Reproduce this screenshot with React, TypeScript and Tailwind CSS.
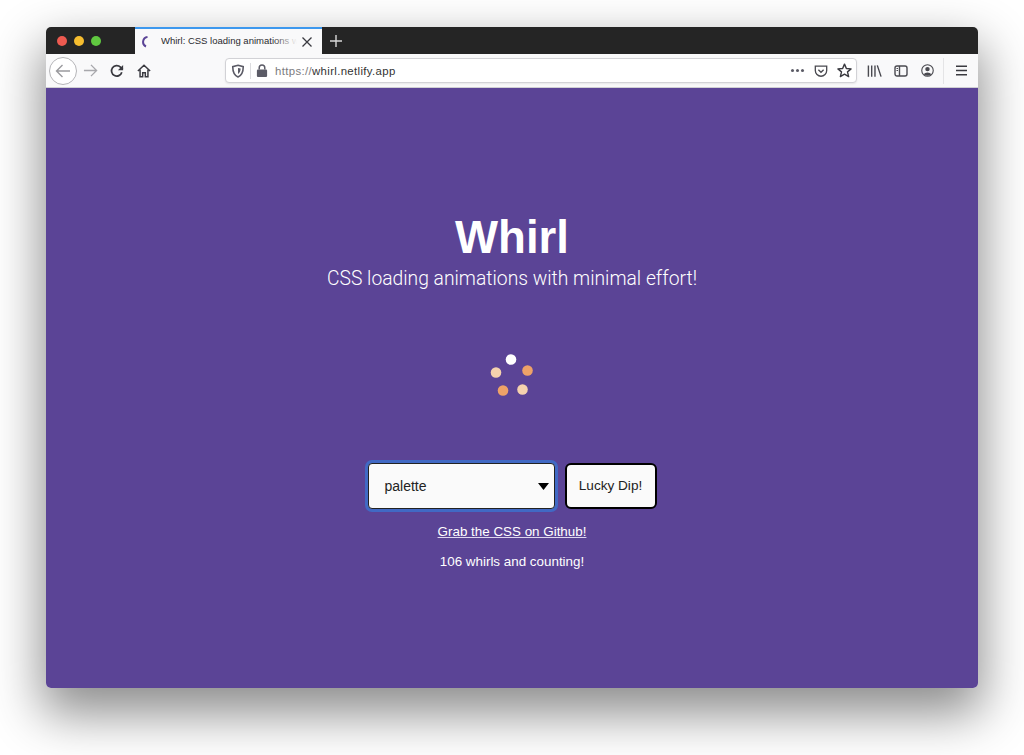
import React from 'react';

const sans = { fontFamily: '"Liberation Sans", Arial, sans-serif' };

const IconShield = () => (
  <svg width="14" height="14" viewBox="0 0 16 16" fill="none" stroke="#5b5b66" strokeWidth="1.8">
    <path d="M8 1.5 L14 3 C14 9 12 13 8 14.8 C4 13 2 9 2 3 Z" />
    <path d="M8 4.5 L11 5.2 C11 8 10 10.3 8 11.5 Z" fill="#5b5b66" stroke="none" />
  </svg>
);

const IconLock = () => (
  <svg width="12" height="13" viewBox="0 0 12 14">
    <path d="M3 6 V4 a3 3 0 0 1 6 0 V6" fill="none" stroke="#5b5b66" strokeWidth="1.6" />
    <rect x="0.5" y="6" width="11" height="8" rx="1.2" fill="#5b5b66" />
  </svg>
);

const Toolbar = () => (
  <div className="flex items-center h-[34px] bg-[#f9f9fa] border-b border-[#cfcfd3]">
    <div className="flex items-center justify-center w-[28px] h-[28px] ml-[3px] rounded-full border border-[#b5b5b8] bg-white">
      <svg width="16" height="16" viewBox="0 0 16 16" fill="none" stroke="#9a9a9e" strokeWidth="1.4">
        <path d="M15 8 H1.5 M7.5 2 L1.5 8 L7.5 14" />
      </svg>
    </div>
    <svg className="ml-[6px]" width="15" height="15" viewBox="0 0 16 16" fill="none" stroke="#a8a8ac" strokeWidth="1.4">
      <path d="M1 8 H14.5 M8.5 2 L14.5 8 L8.5 14" />
    </svg>
    <svg className="ml-[12px]" width="14" height="14" viewBox="0 0 16 16" fill="none" stroke="#3a3a40" strokeWidth="2">
      <path d="M13.5 9.5 A6 6 0 1 1 12 3.6 L14.5 6" />
      <path d="M15 1 V7 H9" fill="#3a3a40" stroke="none" />
    </svg>
    <svg className="ml-[13px]" width="14" height="14" viewBox="0 0 16 16" fill="none" stroke="#3a3a40" strokeWidth="1.7">
      <path d="M1 8 L8 1.5 L15 8 M3.5 6.5 V14.5 H6.5 V10 H9.5 V14.5 H12.5 V6.5" />
    </svg>
    <div className="flex items-center ml-[74px] w-[632px] h-[25px] rounded-[4px] border border-[#d2d2d6] bg-white shadow-[0_1px_2px_rgba(0,0,0,0.08)]">
      <div className="flex items-center justify-center w-[24px] h-[23px]"><IconShield /></div>
      <div className="w-px h-[16px] bg-[#dcdcdf]" />
      <div className="flex items-center ml-[5px]"><IconLock /></div>
      <span className="ml-[7px] mt-[2px] text-[11.4px] text-[#333] tracking-[0.35px] whitespace-nowrap" style={sans}>
        <span className="text-[#7b7b80]">https://</span>whirl.netlify.app
      </span>
      <div className="flex items-center gap-[2px] ml-auto">
        <div className="w-[3px] h-[3px] rounded-full bg-[#5b5b66]" />
        <div className="w-[3px] h-[3px] rounded-full bg-[#5b5b66]" />
        <div className="w-[3px] h-[3px] rounded-full bg-[#5b5b66]" />
      </div>
      <svg className="ml-[10px]" width="14" height="14" viewBox="0 0 16 16" fill="none" stroke="#4a4a50" strokeWidth="1.5">
        <path d="M1.5 2.5 H14.5 V7.5 A6.5 6.5 0 0 1 1.5 7.5 Z" />
        <path d="M5 6.5 L8 9.5 L11 6.5" />
      </svg>
      <svg className="ml-[9px] mr-[4px]" width="15" height="15" viewBox="0 0 16 16" fill="none" stroke="#3a3a40" strokeWidth="1.5" strokeLinejoin="round">
        <path d="M8 1.2 L10 5.8 L15 6.3 L11.2 9.5 L12.4 14.5 L8 11.9 L3.6 14.5 L4.8 9.5 L1 6.3 L6 5.8 Z" />
      </svg>
    </div>
    <svg className="ml-[10px]" width="15" height="14" viewBox="0 0 16 14" fill="none" stroke="#4a4a50" strokeWidth="1.5">
      <path d="M1.5 1 V13 M5 1 V13 M8.5 1 V13 M11 1 L15 13" />
    </svg>
    <svg className="ml-[12px]" width="14" height="14" viewBox="0 0 14 14" fill="none" stroke="#4a4a50" strokeWidth="1.4">
      <rect x="1" y="2" width="12" height="10" rx="2" />
      <path d="M5.5 2 V12" />
      <path d="M2.5 4.5 H4 M2.5 6.5 H4" strokeWidth="1" />
    </svg>
    <svg className="ml-[13px]" width="13" height="13" viewBox="0 0 14 14">
      <circle cx="7" cy="7" r="6.2" fill="none" stroke="#4a4a50" strokeWidth="1.2" />
      <circle cx="7" cy="5.5" r="2.4" fill="#4a4a50" />
      <path d="M2.8 11 A5 4 0 0 1 11.2 11 A6 6 0 0 1 2.8 11" fill="#4a4a50" />
    </svg>
    <div className="w-px h-[26px] ml-[9px] bg-[#e4e4e6]" />
    <svg className="ml-[12px]" width="11" height="11" viewBox="0 0 11 11" stroke="#3a3a40" strokeWidth="1.4">
      <path d="M0 1.2 H11 M0 5.5 H11 M0 9.8 H11" />
    </svg>
  </div>
);

const TabBar = () => (
  <div className="flex items-stretch h-[27px] bg-[#252525]">
    <div className="flex items-center gap-[7px] pl-[11px] w-[89px]">
      <div className="w-[10px] h-[10px] rounded-full bg-[#ed5a50]" />
      <div className="w-[10px] h-[10px] rounded-full bg-[#f6bd2f]" />
      <div className="w-[10px] h-[10px] rounded-full bg-[#60c840]" />
    </div>
    <div className="flex items-center w-[187px] bg-[#f9f9fa] border-t-2 border-[#3d98ee] pl-[7px]">
      <svg width="12" height="14" viewBox="0 0 12 14" fill="none">
        <path d="M5.5 2 A5 5 0 0 0 4 11.5" stroke="#5b4496" strokeWidth="2" />
      </svg>
      <div className="relative ml-[7px] w-[136px] overflow-hidden whitespace-nowrap text-[9.5px] text-[#2a2a2e]" style={sans}>
        Whirl: CSS loading animations with minimal effort
        <div className="absolute inset-y-0 right-0 w-[24px] bg-gradient-to-r from-transparent to-[#f9f9fa]" />
      </div>
      <svg className="ml-[5px]" width="10" height="10" viewBox="0 0 10 10" stroke="#3a3a40" strokeWidth="1.3">
        <path d="M0.5 0.5 L9.5 9.5 M9.5 0.5 L0.5 9.5" />
      </svg>
    </div>
    <div className="flex items-center ml-[8px]">
      <svg width="12" height="12" viewBox="0 0 12 12" stroke="#d8d8d8" strokeWidth="1.4">
        <path d="M6 0 V12 M0 6 H12" />
      </svg>
    </div>
  </div>
);

const Spinner = () => (
  <svg className="mt-[63px]" width="50" height="46" viewBox="0 0 50 46">
    <circle cx="24" cy="5.5" r="5.3" fill="#ffffff" />
    <circle cx="40.5" cy="16.5" r="5.3" fill="#eea268" />
    <circle cx="35.5" cy="35.5" r="5.3" fill="#f5d2ae" />
    <circle cx="16" cy="36.5" r="5.3" fill="#eea268" />
    <circle cx="9" cy="18.5" r="5.3" fill="#f5d2ae" />
  </svg>
);

const Controls = () => (
  <div className="flex items-center mt-[63px] gap-[10px]" style={sans}>
    <div className="flex items-center justify-between w-[187px] h-[46px] pl-[16px] pr-[5px] rounded-[4px] border-[1.5px] border-[#222] bg-[#fafafa] ring-[3px] ring-[#4169c4] text-[14px] text-[#222]">
      <span>palette</span>
      <svg width="11" height="7" viewBox="0 0 11 7"><path d="M0 0 H11 L5.5 7 Z" fill="#000" /></svg>
    </div>
    <button className="w-[92px] h-[46px] rounded-[6px] border-[2px] border-black bg-[#fafafa] text-[13.6px] text-[#222]">
      Lucky Dip!
    </button>
  </div>
);

export default function App() {
  return (
    <div className="w-screen h-screen overflow-hidden bg-white pt-[27px] pl-[46px]">
      <div className="flex flex-col w-[932px] h-[661px] rounded-[5px] overflow-hidden shadow-[0_22px_50px_4px_rgba(0,0,0,0.45)]">
        <TabBar />
        <Toolbar />
        <main className="flex flex-1 flex-col items-center bg-[#5b4496] pt-[121px] text-white" style={sans}>
          <h1 className="text-[45.6px] leading-[58px] font-bold">Whirl</h1>
          <p className="text-[19.3px] leading-[24px] font-light" style={{ fontFamily: 'Roboto, sans-serif' }}>
            CSS loading animations with minimal effort!
          </p>
          <Spinner />
          <Controls />
          <a className="mt-[13px] text-[13.4px] leading-[20px] underline decoration-[#ddd6ee]" href="#">Grab the CSS on Github!</a>
          <p className="mt-[10px] text-[13.4px] leading-[20px]">106 whirls and counting!</p>
        </main>
      </div>
    </div>
  );
}
